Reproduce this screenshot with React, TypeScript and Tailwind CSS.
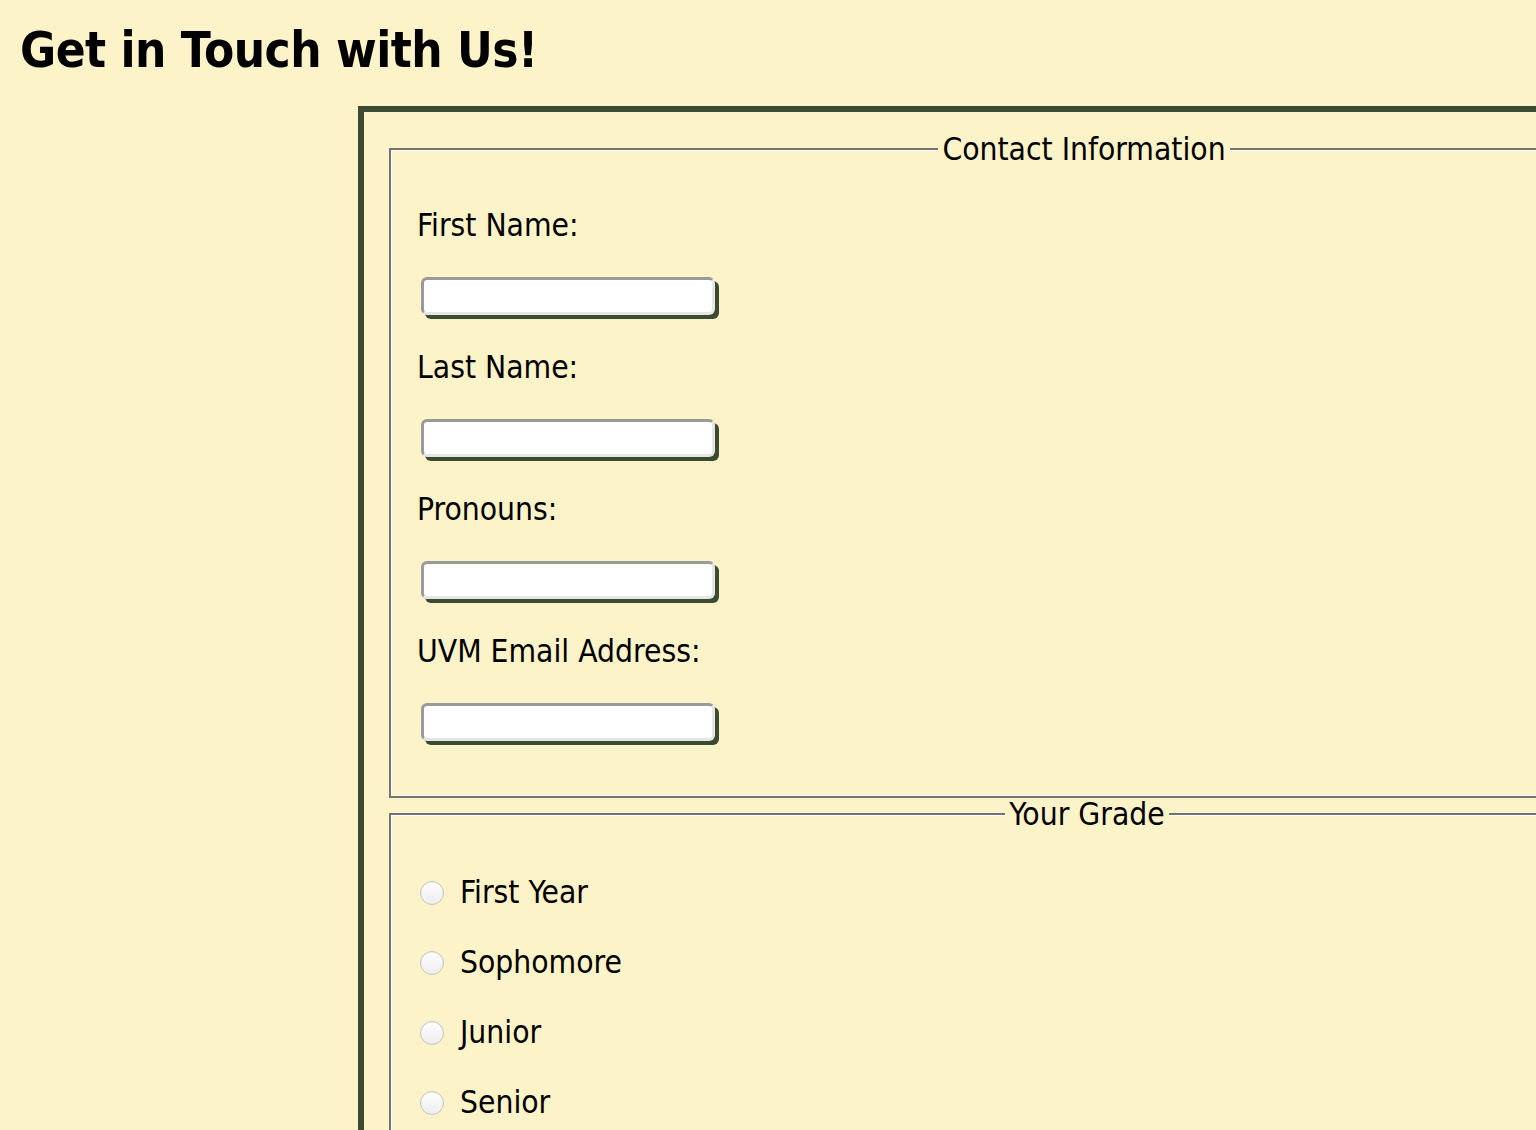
const font = "font-['DejaVu_Sans_Condensed','DejaVu_Sans',sans-serif]";

const fields = ["First Name:", "Last Name:", "Pronouns:", "UVM Email Address:"];
const grades = ["First Year", "Sophomore", "Junior", "Senior"];

const App = () => {
  return (
    <div className={`min-h-[1130px] w-full overflow-hidden bg-[#fcf3c8] text-black ${font}`}>
      <h1 className="pl-5 pt-[20px] text-[49px] font-bold leading-[62px] tracking-[-0.5px]">
        Get in Touch with Us!
      </h1>

      <form className="ml-[358px] mt-[24px] w-[1452px] border-[6px] border-[#3a4b31] px-[25px] pt-[21px]">
        <fieldset className="border-2 border-[#737373] px-[26px] pb-[55px] shadow-[inset_0_0_0_1px_#ffffff]">
          <legend className="mx-auto bg-[#fcf3c8] px-1 text-[31.5px] leading-[32px]">Contact Information</legend>
          <div className="flex flex-col pt-[41px]">
            {fields.map((f, i) => (
              <div key={f} className={i > 0 ? "mt-[33px]" : ""}>
                <label className="block text-[31.5px] leading-[38px]">{f}</label>
                <input
                  type="text"
                  className="ml-1 mt-[33px] block h-[38px] w-[294px] rounded-md border-[3px] border-b-[#e6e6e6] border-l-[#9a9a9a] border-r-[#e6e6e6] border-t-[#9a9a9a] bg-white shadow-[4px_4px_0_#3a4b31] outline-none"
                />
              </div>
            ))}
          </div>
        </fieldset>

        <fieldset className="border-2 border-[#737373] pb-[40px] pl-[29px] pr-[23px] shadow-[inset_0_0_0_1px_#ffffff]">
          <legend className="mx-auto bg-[#fcf3c8] px-1 text-[31.5px] leading-[32px]">Your Grade</legend>
          <div className="flex flex-col gap-[32px] pt-[43px]">
            {grades.map((g) => (
              <label key={g} className="flex items-center text-[31.5px] leading-[38px]">
                <span className="mt-[2px] inline-block h-6 w-6 rounded-full border border-[#c4c4c4] bg-[linear-gradient(#ffffff,#ededed)] shadow-[inset_0_1px_1px_rgba(0,0,0,0.06)]" />
                <span className="ml-4">{g}</span>
              </label>
            ))}
          </div>
        </fieldset>
      </form>
    </div>
  );
};

export default App;
